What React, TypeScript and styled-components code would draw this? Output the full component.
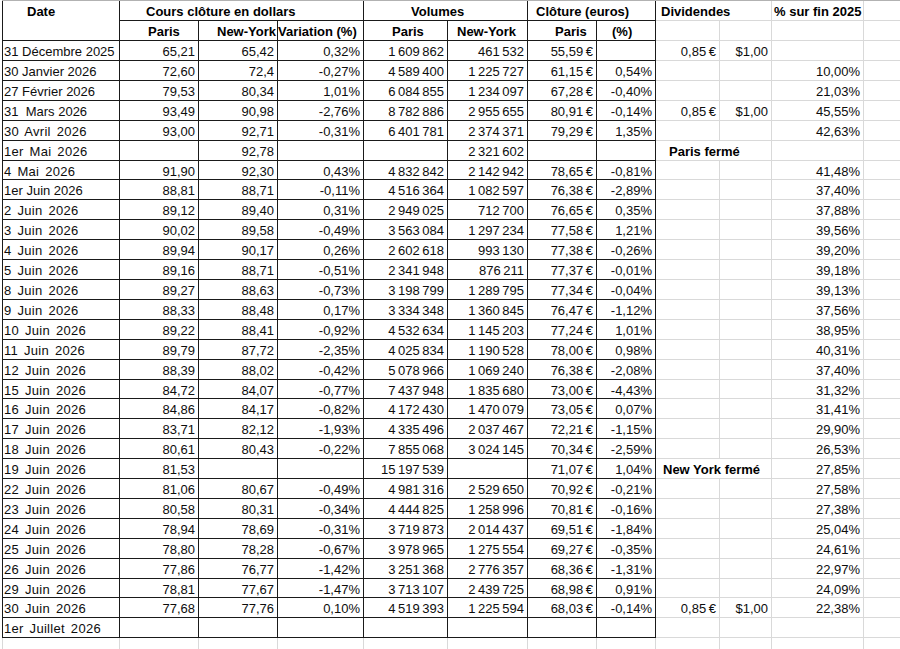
import React from 'react';
import styled, { createGlobalStyle, css } from 'styled-components';

const DARK = '#1a1a1a';
const LIGHT = '#d9d9d9';

const GlobalStyle = createGlobalStyle`
  html, body { margin: 0; padding: 0; background: #ffffff; overflow: hidden; }
  body { font-family: "Liberation Sans", Arial, sans-serif; }
`;

const Sheet = styled.div`
  display: grid;
  grid-template-columns: 118px 79px 79px 86px 84px 80px 69px 59px 64px 52px 92px 80px;
  grid-template-rows: 20.2px repeat(32, 19.91px);
  margin-left: 2px;
  border-top: 1px solid #b2b2b2;
  width: max-content;
  font-size: 13px;
  color: #0d0d0d;
`;

type CellProps = {
  $dark?: boolean;
  $left?: 'dark' | 'light';
  $span?: number;
  $rows?: number;
};

const Cell = styled.div<CellProps>`
  box-sizing: border-box;
  grid-column: span ${(p) => p.$span ?? 1};
  grid-row: span ${(p) => p.$rows ?? 1};
  border-right: 1px solid ${(p) => (p.$dark ? DARK : LIGHT)};
  border-bottom: 1px solid ${(p) => (p.$dark ? DARK : LIGHT)};
  ${(p) =>
    p.$left &&
    css`
      border-left: 1px solid ${p.$left === 'dark' ? DARK : LIGHT};
    `}
  padding-top: 4px;
  line-height: 14px;
  white-space: pre;
  min-width: 0;
`;

const HeaderCell = styled(Cell)<{ $indent?: number; $alignRight?: boolean }>`
  font-weight: 700;
  color: #000;
  text-align: ${(p) => (p.$alignRight ? 'right' : 'left')};
  padding-left: ${(p) => p.$indent ?? 0}px;
  padding-right: ${(p) => (p.$alignRight ? 1 : 0)}px;
`;

const DateCell = styled(Cell)<{ $spaced?: boolean }>`
  text-align: left;
  padding-left: 1px;
  ${(p) =>
    p.$spaced &&
    css`
      letter-spacing: 0.3px;
      word-spacing: 2px;
    `}
`;

const NumCell = styled(Cell)`
  text-align: right;
  padding-right: 3px;
  word-spacing: -1px;
`;

const NoteCell = styled(Cell)<{ $indent: number }>`
  font-weight: 700;
  color: #000;
  text-align: left;
  padding-left: ${(p) => p.$indent}px;
`;

type Row = {
  date: string;
  spaced?: boolean;
  v: string[];
  div?: boolean;
  pct?: string;
  note?: string;
  noteIndent?: number;
};

const E = ['', '', '', '', '', '', ''];

const rows: Row[] = [
  { date: '31 Décembre 2025', v: ['65,21', '65,42', '0,32%', '1 609 862', '461 532', '55,59 €', ''], div: true },
  { date: '30 Janvier 2026', v: ['72,60', '72,4', '-0,27%', '4 589 400', '1 225 727', '61,15 €', '0,54%'], pct: '10,00%' },
  { date: '27 Février 2026', v: ['79,53', '80,34', '1,01%', '6 084 855', '1 234 097', '67,28 €', '-0,40%'], pct: '21,03%' },
  { date: '31  Mars 2026', v: ['93,49', '90,98', '-2,76%', '8 782 886', '2 955 655', '80,91 €', '-0,14%'], div: true, pct: '45,55%' },
  { date: '30 Avril 2026', spaced: true, v: ['93,00', '92,71', '-0,31%', '6 401 781', '2 374 371', '79,29 €', '1,35%'], pct: '42,63%' },
  { date: '1er Mai 2026', spaced: true, v: ['', '92,78', '', '', '2 321 602', '', ''], note: 'Paris fermé', noteIndent: 13 },
  { date: '4 Mai 2026', spaced: true, v: ['91,90', '92,30', '0,43%', '4 832 842', '2 142 942', '78,65 €', '-0,81%'], pct: '41,48%' },
  { date: '1er Juin 2026', v: ['88,81', '88,71', '-0,11%', '4 516 364', '1 082 597', '76,38 €', '-2,89%'], pct: '37,40%' },
  { date: '2 Juin 2026', spaced: true, v: ['89,12', '89,40', '0,31%', '2 949 025', '712 700', '76,65 €', '0,35%'], pct: '37,88%' },
  { date: '3 Juin 2026', spaced: true, v: ['90,02', '89,58', '-0,49%', '3 563 084', '1 297 234', '77,58 €', '1,21%'], pct: '39,56%' },
  { date: '4 Juin 2026', spaced: true, v: ['89,94', '90,17', '0,26%', '2 602 618', '993 130', '77,38 €', '-0,26%'], pct: '39,20%' },
  { date: '5 Juin 2026', spaced: true, v: ['89,16', '88,71', '-0,51%', '2 341 948', '876 211', '77,37 €', '-0,01%'], pct: '39,18%' },
  { date: '8 Juin 2026', spaced: true, v: ['89,27', '88,63', '-0,73%', '3 198 799', '1 289 795', '77,34 €', '-0,04%'], pct: '39,13%' },
  { date: '9 Juin 2026', spaced: true, v: ['88,33', '88,48', '0,17%', '3 334 348', '1 360 845', '76,47 €', '-1,12%'], pct: '37,56%' },
  { date: '10 Juin 2026', spaced: true, v: ['89,22', '88,41', '-0,92%', '4 532 634', '1 145 203', '77,24 €', '1,01%'], pct: '38,95%' },
  { date: '11 Juin 2026', spaced: true, v: ['89,79', '87,72', '-2,35%', '4 025 834', '1 190 528', '78,00 €', '0,98%'], pct: '40,31%' },
  { date: '12 Juin 2026', spaced: true, v: ['88,39', '88,02', '-0,42%', '5 078 966', '1 069 240', '76,38 €', '-2,08%'], pct: '37,40%' },
  { date: '15 Juin 2026', spaced: true, v: ['84,72', '84,07', '-0,77%', '7 437 948', '1 835 680', '73,00 €', '-4,43%'], pct: '31,32%' },
  { date: '16 Juin 2026', spaced: true, v: ['84,86', '84,17', '-0,82%', '4 172 430', '1 470 079', '73,05 €', '0,07%'], pct: '31,41%' },
  { date: '17 Juin 2026', spaced: true, v: ['83,71', '82,12', '-1,93%', '4 335 496', '2 037 467', '72,21 €', '-1,15%'], pct: '29,90%' },
  { date: '18 Juin 2026', spaced: true, v: ['80,61', '80,43', '-0,22%', '7 855 068', '3 024 145', '70,34 €', '-2,59%'], pct: '26,53%' },
  { date: '19 Juin 2026', spaced: true, v: ['81,53', '', '', '15 197 539', '', '71,07 €', '1,04%'], note: 'New York fermé', noteIndent: 7, pct: '27,85%' },
  { date: '22 Juin 2026', spaced: true, v: ['81,06', '80,67', '-0,49%', '4 981 316', '2 529 650', '70,92 €', '-0,21%'], pct: '27,58%' },
  { date: '23 Juin 2026', spaced: true, v: ['80,58', '80,31', '-0,34%', '4 444 825', '1 258 996', '70,81 €', '-0,16%'], pct: '27,38%' },
  { date: '24 Juin 2026', spaced: true, v: ['78,94', '78,69', '-0,31%', '3 719 873', '2 014 437', '69,51 €', '-1,84%'], pct: '25,04%' },
  { date: '25 Juin 2026', spaced: true, v: ['78,80', '78,28', '-0,67%', '3 978 965', '1 275 554', '69,27 €', '-0,35%'], pct: '24,61%' },
  { date: '26 Juin 2026', spaced: true, v: ['77,86', '76,77', '-1,42%', '3 251 368', '2 776 357', '68,36 €', '-1,31%'], pct: '22,97%' },
  { date: '29 Juin 2026', spaced: true, v: ['78,81', '77,67', '-1,47%', '3 713 107', '2 439 725', '68,98 €', '0,91%'], pct: '24,09%' },
  { date: '30 Juin 2026', spaced: true, v: ['77,68', '77,76', '0,10%', '4 519 393', '1 225 594', '68,03 €', '-0,14%'], div: true, pct: '22,38%' },
  { date: '1er Juillet 2026', spaced: true, v: E },
];

function DataRow({ row }: { row: Row }) {
  return (
    <>
      <DateCell $dark $left="dark" $spaced={row.spaced}>
        {row.date}
      </DateCell>
      {row.v.map((val, i) => (
        <NumCell key={i} $dark>
          {val}
        </NumCell>
      ))}
      {row.note ? (
        <NoteCell $span={2} $indent={row.noteIndent ?? 6}>
          {row.note}
        </NoteCell>
      ) : (
        <>
          <NumCell>{row.div ? '0,85 €' : ''}</NumCell>
          <NumCell>{row.div ? '$1,00' : ''}</NumCell>
        </>
      )}
      <NumCell>{row.pct ?? ''}</NumCell>
      <NumCell />
    </>
  );
}

export default function App() {
  return (
    <>
      <GlobalStyle />
      <Sheet>
        <HeaderCell $dark $left="dark" $rows={2} $indent={24}>
          Date
        </HeaderCell>
        <HeaderCell $dark $span={3} $indent={26}>
          Cours clôture en dollars
        </HeaderCell>
        <HeaderCell $dark $span={2} $indent={47}>
          Volumes
        </HeaderCell>
        <HeaderCell $dark $span={2} $indent={8}>
          Clôture (euros)
        </HeaderCell>
        <HeaderCell $span={2} $indent={5}>
          Dividendes
        </HeaderCell>
        <HeaderCell $indent={2}>% sur fin 2025</HeaderCell>
        <HeaderCell />

        <HeaderCell $dark $indent={28}>
          Paris
        </HeaderCell>
        <HeaderCell $dark $alignRight>
          New-York
        </HeaderCell>
        <HeaderCell $dark $indent={0}>
          Variation (%)
        </HeaderCell>
        <HeaderCell $dark $indent={28}>
          Paris
        </HeaderCell>
        <HeaderCell $dark $indent={9}>
          New-York
        </HeaderCell>
        <HeaderCell $dark $indent={27}>
          Paris
        </HeaderCell>
        <HeaderCell $dark $indent={15}>
          (%)
        </HeaderCell>
        <HeaderCell />
        <HeaderCell />
        <HeaderCell />
        <HeaderCell />

        {rows.map((r, i) => (
          <DataRow key={i} row={r} />
        ))}

        <DateCell $left="light" />
        {Array.from({ length: 11 }).map((_, i) => (
          <NumCell key={i} />
        ))}
      </Sheet>
    </>
  );
}
